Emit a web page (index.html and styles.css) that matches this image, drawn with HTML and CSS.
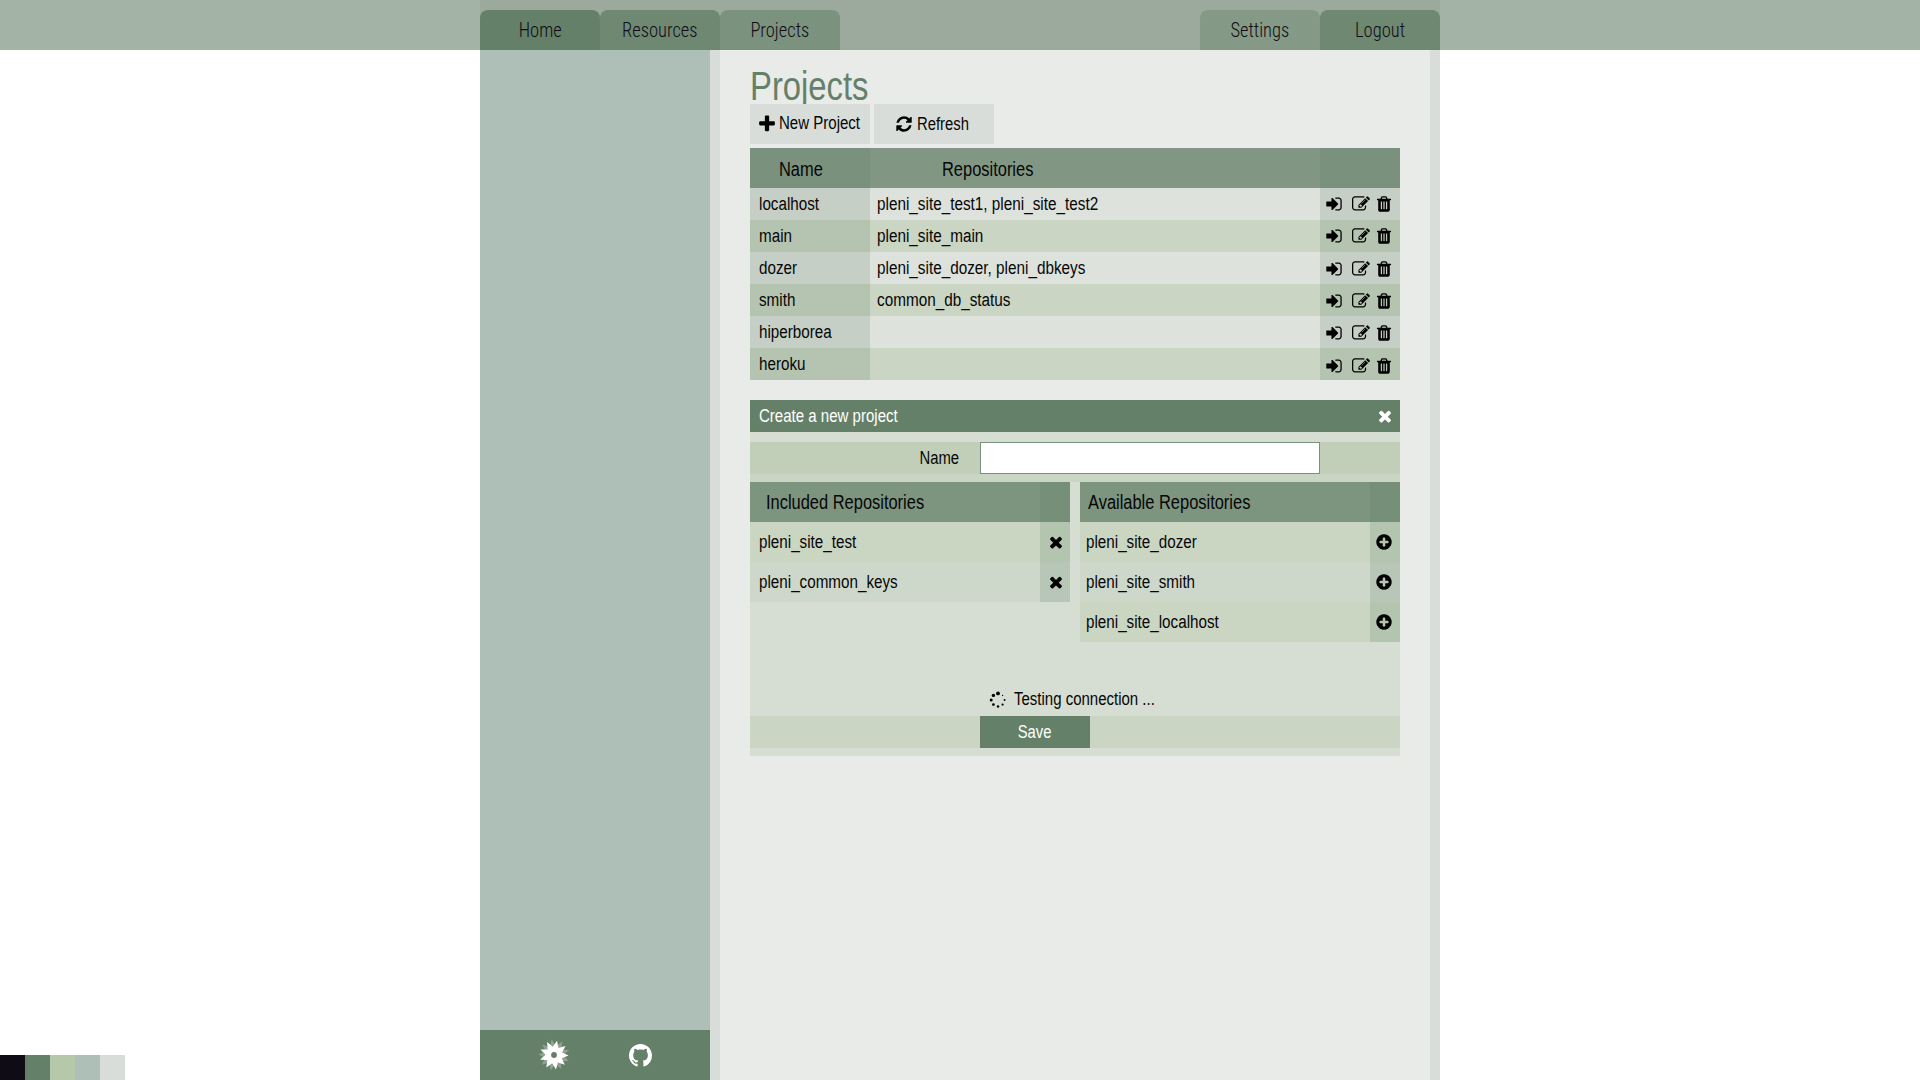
FILE: index.html
```html
<!DOCTYPE html>
<html lang="en">
<head>
<meta charset="utf-8">
<title>Projects</title>
<link rel="stylesheet" href="styles.css">
</head>
<body>
<svg class="defs" width="0" height="0">
  <symbol id="plus" viewBox="0 0 1792 1792"><path d="M1600 736v192q0 40-28 68t-68 28h-416v416q0 40-28 68t-68 28h-192q-40 0-68-28t-28-68v-416h-416q-40 0-68-28t-28-68v-192q0-40 28-68t68-28h416v-416q0-40 28-68t68-28h192q40 0 68 28t28 68v416h416q40 0 68 28t28 68z"/></symbol>
  <symbol id="refresh" viewBox="0 0 1792 1792"><path d="M1639 1056q0 5-1 7-64 268-268 434.5t-478 166.5q-146 0-282.5-55t-243.5-157l-129 129q-19 19-45 19t-45-19-19-45v-448q0-26 19-45t45-19h448q26 0 45 19t19 45-19 45l-137 137q71 66 161 102t187 36q134 0 250-65t186-179q11-17 53-117 8-23 30-23h192q13 0 22.5 9.5t9.5 22.5zm25-800v448q0 26-19 45t-45 19h-448q-26 0-45-19t-19-45 19-45l138-138q-148-137-349-137-134 0-250 65t-186 179q-11 17-53 117-8 23-30 23h-199q-13 0-22.5-9.5t-9.5-22.5v-7q65-268 270-434.5t480-166.5q146 0 284 55.5t245 156.5l130-129q19-19 45-19t45 19 19 45z"/></symbol>
  <symbol id="enter" viewBox="0 0 1792 1792"><path d="M1312 896q0 26-19 45l-544 544q-19 19-45 19t-45-19-19-45v-288h-448q-26 0-45-19t-19-45v-384q0-26 19-45t45-19h448v-288q0-26 19-45t45-19 45 19l544 544q19 19 19 45zm352-352v704q0 119-84.5 203.5t-203.5 84.5h-320q-13 0-22.5-9.5t-9.5-22.5q0-4-1-20t-.5-26.5 3-23.5 10-19.5 20.5-6.5h320q66 0 113-47t47-113v-704q0-66-47-113t-113-47h-312l-11.5-1-11.5-3-8-5.5-7-9-2-13.5q0-4-1-20t-.5-26.5 3-23.5 10-19.5 20.5-6.5h320q119 0 203.5 84.5t84.5 203.5z"/></symbol>
  <symbol id="edit" viewBox="0 0 1792 1792"><path d="M888 1184l116-116-152-152-116 116v56h96v96h56zm440-720q-16-16-33 1l-350 350q-17 17-1 33t33-1l350-350q17-17 1-33zm80 594v190q0 119-84.5 203.5t-203.5 84.5h-832q-119 0-203.5-84.5t-84.5-203.5v-832q0-119 84.5-203.5t203.5-84.5h832q63 0 117 25 15 7 18 23 3 17-9 29l-49 49q-14 14-32 8-23-6-45-6h-832q-66 0-113 47t-47 113v832q0 66 47 113t113 47h832q66 0 113-47t47-113v-126q0-13 9-22l64-64q15-15 35-7t20 29zm-96-738l288 288-672 672h-288v-288zm444 132l-92 92-288-288 92-92q28-28 68-28t68 28l152 152q28 28 28 68t-28 68z"/></symbol>
  <symbol id="trash" viewBox="0 0 1792 1792"><path d="M704 1376v-704q0-14-9-23t-23-9h-64q-14 0-23 9t-9 23v704q0 14 9 23t23 9h64q14 0 23-9t9-23zm256 0v-704q0-14-9-23t-23-9h-64q-14 0-23 9t-9 23v704q0 14 9 23t23 9h64q14 0 23-9t9-23zm256 0v-704q0-14-9-23t-23-9h-64q-14 0-23 9t-9 23v704q0 14 9 23t23 9h64q14 0 23-9t9-23zm-544-992h448l-48-117q-7-9-17-11h-317q-10 2-17 11zm928 32v64q0 14-9 23t-23 9h-96v948q0 83-47 143.5t-113 60.5h-832q-66 0-113-58.5t-47-141.5v-952h-96q-14 0-23-9t-9-23v-64q0-14 9-23t23-9h309l70-167q15-37 54-63t79-26h320q40 0 79 26t54 63l70 167h309q14 0 23 9t9 23z"/></symbol>
  <symbol id="times" viewBox="0 0 1792 1792"><path d="M1490 1322q0 40-28 68l-136 136q-28 28-68 28t-68-28l-294-294-294 294q-28 28-68 28t-68-28l-136-136q-28-28-28-68t28-68l294-294-294-294q-28-28-28-68t28-68l136-136q28-28 68-28t68 28l294 294 294-294q28-28 68-28t68 28l136 136q28 28 28 68t-28 68l-294 294 294 294q28 28 28 68z"/></symbol>
  <symbol id="add" viewBox="0 0 1792 1792"><path d="M1344 960v-128q0-26-19-45t-45-19h-256v-256q0-26-19-45t-45-19h-128q-26 0-45 19t-19 45v256h-256q-26 0-45 19t-19 45v128q0 26 19 45t45 19h256v256q0 26 19 45t45 19h128q26 0 45-19t19-45v-256h256q26 0 45-19t19-45zm320-64q0 209-103 385.5t-279.5 279.5-385.5 103-385.5-103-279.5-279.5-103-385.5 103-385.5 279.5-279.5 385.5-103 385.5 103 279.5 279.5 103 385.5z"/></symbol>
  <symbol id="star" viewBox="-18 -18 36 36"><polygon points="-6.9,-12.9 -1.2,-8.3 3,-14.3 4.5,-7.1 11.5,-9 8,-2.6 14.6,.5 7.8,3.2 10.8,9.8 3.9,7.4 2,14.5 -1.8,8.2 -7.7,12.4 -6.6,5.2 -13.9,4.5 -8.4,-.3 -13.5,-5.5 -6.3,-5.6"/></symbol>
</svg>

<header class="topbar">
  <nav class="nav">
    <a class="tab tab-1"><span>Home</span></a>
    <a class="tab tab-2"><span>Resources</span></a>
    <a class="tab tab-3"><span>Projects</span></a>
    <span class="spacer"></span>
    <a class="tab tab-4"><span>Settings</span></a>
    <a class="tab tab-2"><span>Logout</span></a>
  </nav>
</header>

<div class="shell">
  <aside class="sidebar">
    <footer class="side-foot">
      <svg class="logo" viewBox="-18 -18 36 36"><use class="shade" href="#star" x="-18" y="-18" width="36" height="36" transform="rotate(20) scale(1.08)"/><use href="#star" x="-18" y="-18" width="36" height="36"/><circle class="hole" r="2.9"/></svg>
      <svg class="github" viewBox="0 0 16 16"><path d="M8 0C3.58 0 0 3.58 0 8c0 3.54 2.29 6.53 5.47 7.59.4.07.55-.17.55-.38 0-.19-.01-.82-.01-1.49-2.01.37-2.53-.49-2.69-.94-.09-.23-.48-.94-.82-1.13-.28-.15-.68-.52-.01-.53.63-.01 1.08.58 1.23.82.72 1.21 1.87.87 2.33.66.07-.52.28-.87.51-1.07-1.78-.2-3.64-.89-3.64-3.95 0-.87.31-1.59.82-2.15-.08-.2-.36-1.02.08-2.12 0 0 .67-.21 2.2.82.64-.18 1.32-.27 2-.27s1.36.09 2 .27c1.53-1.04 2.2-.82 2.2-.82.44 1.1.16 1.92.08 2.12.51.56.82 1.27.82 2.15 0 3.07-1.87 3.75-3.65 3.95.29.25.54.73.54 1.48 0 1.07-.01 1.93-.01 2.2 0 .21.15.46.55.38A8.01 8.01 0 0 0 16 8c0-4.42-3.58-8-8-8z"/></svg>
    </footer>
  </aside>
  <main class="content">
    <h1><span>Projects</span></h1>
    <div class="toolbar">
      <a class="btn btn-new"><svg><use href="#plus"/></svg><span>New Project</span></a>
      <a class="btn btn-refresh"><svg><use href="#refresh"/></svg><span>Refresh</span></a>
    </div>

    <section class="projects">
      <div class="row head"><div class="name"><span>Name</span></div><div class="repos"><span>Repositories</span></div><div class="acts"></div></div>
      <div class="row"><div class="name"><span>localhost</span></div><div class="repos"><span>pleni_site_test1, pleni_site_test2</span></div><div class="acts"><svg><use href="#enter"/></svg><svg><use href="#edit"/></svg><svg><use href="#trash"/></svg></div></div>
      <div class="row"><div class="name"><span>main</span></div><div class="repos"><span>pleni_site_main</span></div><div class="acts"><svg><use href="#enter"/></svg><svg><use href="#edit"/></svg><svg><use href="#trash"/></svg></div></div>
      <div class="row"><div class="name"><span>dozer</span></div><div class="repos"><span>pleni_site_dozer, pleni_dbkeys</span></div><div class="acts"><svg><use href="#enter"/></svg><svg><use href="#edit"/></svg><svg><use href="#trash"/></svg></div></div>
      <div class="row"><div class="name"><span>smith</span></div><div class="repos"><span>common_db_status</span></div><div class="acts"><svg><use href="#enter"/></svg><svg><use href="#edit"/></svg><svg><use href="#trash"/></svg></div></div>
      <div class="row"><div class="name"><span>hiperborea</span></div><div class="repos"></div><div class="acts"><svg><use href="#enter"/></svg><svg><use href="#edit"/></svg><svg><use href="#trash"/></svg></div></div>
      <div class="row"><div class="name"><span>heroku</span></div><div class="repos"></div><div class="acts"><svg><use href="#enter"/></svg><svg><use href="#edit"/></svg><svg><use href="#trash"/></svg></div></div>
    </section>

    <section class="panel">
      <div class="panel-head"><span>Create a new project</span><svg><use href="#times"/></svg></div>
      <div class="field"><label for="name"><span>Name</span></label><input id="name" type="text"></div>
      <div class="lists">
        <div class="list included">
          <div class="item list-head"><div><span>Included Repositories</span></div><i></i></div>
          <div class="item"><div><span>pleni_site_test</span></div><i><svg><use href="#times"/></svg></i></div>
          <div class="item"><div><span>pleni_common_keys</span></div><i><svg><use href="#times"/></svg></i></div>
        </div>
        <div class="list available">
          <div class="item list-head"><div><span>Available Repositories</span></div><i></i></div>
          <div class="item"><div><span>pleni_site_dozer</span></div><i><svg><use href="#add"/></svg></i></div>
          <div class="item"><div><span>pleni_site_smith</span></div><i><svg><use href="#add"/></svg></i></div>
          <div class="item"><div><span>pleni_site_localhost</span></div><i><svg><use href="#add"/></svg></i></div>
        </div>
      </div>
      <div class="status">
        <svg viewBox="-9 -9 18 18"><circle cy="-6.6" r="1.9"/><circle cx="-4.6" cy="-4.6" r="1.7"/><circle cx="-6.8" r="1.5"/><circle cx="-4.6" cy="4.6" r="1.35"/><circle cy="6.6" r="1.25"/><circle cx="4.6" cy="4.6" r="1.1"/><circle cx="6.6" r=".95"/><circle cx="4.6" cy="-4.6" r=".65"/></svg>
        <span>Testing connection ...</span>
      </div>
      <div class="submit"><button><span>Save</span></button></div>
    </section>
  </main>
</div>

<div class="palette"><i class="c1"></i><i class="c2"></i><i class="c3"></i><i class="c4"></i><i class="c5"></i></div>
</body>
</html>
```
FILE: styles.css
```css
* { box-sizing: border-box; }
body {
  margin: 0;
  height: 1080px;
  overflow: hidden;
  background: #fff;
  color: #060606;
  font: 18px "Liberation Sans", Arial, sans-serif;
}
.defs { position: absolute; }
svg { display: block; flex: none; width: 18px; height: 18px; fill: #000; }

/* condensed lettering */
span { white-space: nowrap; }
h1 span, .btn span, .row span, .panel span {
  display: inline-block;
  transform: scaleX(.845);
  transform-origin: 0 50%;
}

.topbar { height: 50px; background: #a3b3a6; }
.nav { width: 960px; height: 50px; margin: 0 auto; padding-top: 10px; display: flex; background: #9baa9c; }
.tab {
  width: 120px; height: 40px; line-height: 40px;
  text-align: center;
  border-radius: 8px 8px 0 0;
  font-family: "Roboto Condensed", Roboto, sans-serif;
  font-weight: 300; font-size: 20px; color: #0f0c16;
}
.tab span { display: inline-block; transform: scaleX(.925); }
.spacer { flex: 1; }
.tab-1 { background: #658068; }
.tab-2 { background: #6f8872; }
.tab-3 { background: #7b927e; }
.tab-4 { background: #859a86; }

.shell { width: 960px; height: 1030px; margin: 0 auto; display: flex; }
.sidebar { width: 230px; background: #adbfb7; display: flex; flex-direction: column; justify-content: flex-end; }
.side-foot { height: 50px; background: #658068; display: flex; align-items: center; padding-left: 56.3px; }
.side-foot svg { fill: #fff; }
.side-foot .logo { width: 36px; height: 36px; overflow: visible; }
.logo .shade { opacity: .27; }
.side-foot .hole { fill: #658068; }
.side-foot .github { width: 23px; height: 23px; margin-left: 56.5px; }

.content {
  width: 730px;
  padding: 0 30px;
  background: #e9ebe8;
  border: solid #d8ddd9;
  border-width: 0 10px;
}
h1 { margin: 0; height: 54px; line-height: 73px; font-weight: 400; font-size: 40px; color: #658068; }
h1 span { transform: scaleX(.82); }
/* the buttons lie over the title's descender */
.toolbar { position: relative; z-index: 1; display: flex; gap: 4px; }
.btn { width: 120px; height: 40px; background: #d8ddd9; display: flex; align-items: center; line-height: 20px; }
.btn-new { padding-left: 6.7px; }
.btn-new svg { width: 20px; height: 20px; }
.btn-new span { margin: -3px 0 0 2.7px; transform: scaleX(.835); }
.btn-refresh { padding-left: 20.5px; }
.btn-refresh span { margin: 0 0 1px 4px; transform: scaleX(.825); }

.projects { margin-top: 4px; }
.row { display: grid; grid-template-columns: 120px 450px 80px; height: 32px; line-height: 32px; }
.name { padding-left: 8.5px; background: #c5cfc5; }
.repos { padding-left: 7px; background: #dee2dc; }
.repos span { transform: scaleX(.85); }
.acts { padding-left: 5.3px; background: #c5cfc5; display: flex; align-items: center; }
.acts svg + svg { margin-left: 8.3px; }
.acts svg + svg + svg { margin-left: 5.7px; }
.row:nth-child(odd) .name, .row:nth-child(odd) .acts { background: #b5c4b1; }
.row:nth-child(odd) .repos { background: #cad5c3; }
.row:nth-child(4) .acts { padding-top: 1px; }
.row:nth-child(5) .acts, .row:nth-child(6) .acts { padding-top: 2px; }
.row:nth-child(7) .acts { padding-top: 3px; }
.projects .head { height: 40px; line-height: 42px; font-size: 20px; }
.projects .head .name, .projects .head .acts { background: #7a917d; }
.projects .head .repos { padding-left: 71.5px; background: #829783; }
.projects .head .name { padding-left: 29px; }
.row.head span { transform: scaleX(.822); }

.panel { margin-top: 20px; height: 356px; background: #d6ddd2; }
.panel-head { height: 32px; line-height: 32px; padding: 0 6.5px 0 8.5px; background: #658068; color: #fff; display: flex; justify-content: space-between; align-items: center; }
.panel .panel-head span { transform: scaleX(.835); }
.panel-head svg { fill: #fff; }
.field { height: 40px; margin-top: 10px; border-bottom: 8px solid #cad5c3; background: #c1cfb8; display: flex; }
.field label { width: 230px; padding-right: 21.3px; line-height: 32px; text-align: right; }
.panel .field span { transform: scaleX(.825); transform-origin: 100% 50%; }
.field input { width: 340px; height: 32px; border: 1px solid #7a917d; border-radius: 0; padding: 0 8px; background: #fff; font: inherit; outline: 0; }
.lists { display: flex; gap: 10px; height: 200px; }
.list { width: 320px; }
.item { display: grid; grid-template-columns: 290px 30px; height: 40px; line-height: 40px; background: #ced8ca; }
.item:nth-child(even) { background: #cad5c2; }
.item i { background: #b7c6b7; display: grid; place-items: center; }
.item:nth-child(even) i { background: #b3c4af; }
.included .item i { padding-left: 2px; }
.included .item div { padding-left: 9px; }
.available .item div { padding-left: 5.6px; }
.available .item i { padding-right: 2px; }
.list .list-head { background: #7d947f; font-size: 20px; }
.list .list-head i { background: #758f79; }
.list .list-head span { transform: scaleX(.822); }
.included .list-head div { padding-left: 16.2px; }
.available .list-head div { padding-left: 8px; }
.status { height: 34px; padding-left: 238.8px; display: flex; align-items: center; line-height: 34px; }
.status svg { margin-top: 1px; }
.panel .status span { margin-left: 7px; transform: scaleX(.833); }
.submit { height: 32px; padding-left: 230px; background: #cad5c3; }
.submit button { display: block; width: 110px; height: 32px; padding: 0; border: 0; background: #658068; color: #fff; font: inherit; line-height: 32px; }
.panel .submit span { transform: scaleX(.82); transform-origin: 50% 50%; }

.palette { position: absolute; left: 0; bottom: 0; display: flex; }
.palette i { width: 25px; height: 25px; }
.c1 { background: #0f0c16; }
.c2 { background: #658068; }
.c3 { background: #b5c9aa; }
.c4 { background: #adbfb7; }
.c5 { background: #d8ddd9; }
```
